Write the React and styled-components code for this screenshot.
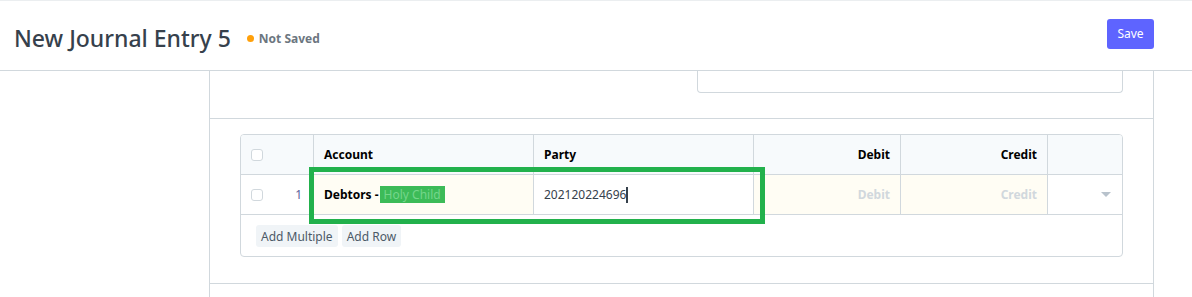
import React from "react";
import styled, { createGlobalStyle } from "styled-components";

const GlobalStyle = createGlobalStyle`
  html, body { margin: 0; padding: 0; background: #ffffff; }
  body { font-family: "Noto Sans", "Open Sans", sans-serif; color: #36414c; }
  * { box-sizing: border-box; }
`;

const Page = styled.div`
  position: relative;
  width: 1192px;
  height: 297px;
  overflow: hidden;
  border-top: 1px solid #ebeef0;
`;

const Header = styled.header`
  height: 70px;
  display: flex;
  align-items: center;
  justify-content: space-between;
  padding: 0 38px 0 14px;
  border-bottom: 1px solid #d1d8dd;
`;

const TitleGroup = styled.div`
  display: flex;
  align-items: center;
  gap: 16px;
  padding-top: 5px;
`;

const Title = styled.h1`
  margin: 0;
  font-size: 23px;
  font-weight: 500;
  color: #36414c;
`;

const Status = styled.span`
  display: flex;
  align-items: center;
  gap: 5px;
  font-size: 12px;
  font-weight: 700;
  color: #6c7680;
  &::before {
    content: "";
    width: 7px;
    height: 7px;
    border-radius: 50%;
    background: #ffa00a;
  }
`;

const PrimaryButton = styled.button`
  width: 47px;
  height: 30px;
  margin-top: -4px;
  border: none;
  border-radius: 3px;
  background: #5e64ff;
  color: #ffffff;
  font-family: inherit;
  font-size: 12px;
`;

const Body = styled.div`
  display: flex;
`;

const Sidebar = styled.aside`
  width: 209px;
  flex: none;
`;

const Main = styled.main`
  width: 945px;
  flex: none;
  border-left: 1px solid #d1d8dd;
  border-right: 1px solid #d1d8dd;
  min-height: 230px;
`;

const Section = styled.section`
  padding: ${(p) => p.$pad};
  border-bottom: 1px solid #d1d8dd;
  height: ${(p) => p.$height};
`;

const TwoCols = styled.div`
  display: grid;
  grid-template-columns: 1fr 1fr;
  gap: 30px;
`;

const FieldTail = styled.div`
  height: 22px;
  border: 1px solid #d1d8dd;
  border-top: none;
  border-radius: 0 0 4px 4px;
`;

const Grid = styled.div`
  border: 1px solid #d1d8dd;
  border-radius: 4px;
  overflow: hidden;
`;

const GridRow = styled.div`
  display: grid;
  grid-template-columns: 72px 220px 220px 147px 147px 75px;
  height: 40px;
  border-bottom: 1px solid #d1d8dd;
  background: ${(p) => (p.$head ? "#f7fafc" : "#ffffff")};
`;

const Cell = styled.div`
  display: flex;
  align-items: center;
  justify-content: ${(p) => p.$justify || "flex-start"};
  padding: 0 10px;
  border-left: ${(p) => (p.$first ? "none" : "1px solid #d1d8dd")};
  background: ${(p) => p.$bg || "transparent"};
  font-size: 12px;
  font-weight: ${(p) => (p.$bold ? 700 : 400)};
  color: ${(p) => p.$color || "#000000"};
  white-space: nowrap;
`;

const Checkbox = styled.span`
  width: 12px;
  height: 12px;
  border: 1px solid #d1d8dd;
  border-radius: 3px;
  background: #ffffff;
  flex: none;
`;

const RowNo = styled.span`
  margin-left: auto;
  margin-right: 1px;
  font-size: 12px;
  color: #5c5f99;
`;

const Redacted = styled.span`
  margin-left: 1px;
  padding: 0 4px;
  background: #3cbb58;
  color: #74d68b;
  font-weight: 400;
`;

const PartyInput = styled.div`
  display: flex;
  align-items: center;
  height: 100%;
  width: 100%;
  font-size: 12px;
  color: #36414c;
  &::after {
    content: "";
    width: 2px;
    height: 16px;
    background: #36414c;
  }
`;

const Placeholder = styled.span`
  color: #d1d8dd;
  font-weight: 700;
  font-size: 12px;
`;

const Caret = styled.span`
  margin: 0 1px 0 auto;
  width: 0;
  height: 0;
  border-left: 5px solid transparent;
  border-right: 5px solid transparent;
  border-top: 5px solid #b8c2cc;
`;

const Footer = styled.div`
  display: flex;
  gap: 4px;
  padding: 10px 15px;
  height: 41px;
`;

const SmallButton = styled.button`
  height: 22px;
  padding: 0 5px;
  border: none;
  border-radius: 3px;
  background: #f0f4f7;
  color: #4c5a67;
  font-family: inherit;
  font-size: 12px;
`;

const Highlight = styled.div`
  position: absolute;
  left: 309px;
  top: 166px;
  width: 456px;
  height: 57px;
  border: 5px solid #22b14c;
  pointer-events: none;
`;

export default function App() {
  return (
    <>
      <GlobalStyle />
      <Page>
        <Header>
          <TitleGroup>
            <Title>New Journal Entry 5</Title>
            <Status>Not Saved</Status>
          </TitleGroup>
          <PrimaryButton>Save</PrimaryButton>
        </Header>
        <Body>
          <Sidebar />
          <Main>
            <Section $pad="0 30px" $height="48px">
              <TwoCols>
                <div />
                <FieldTail />
              </TwoCols>
            </Section>
            <Section $pad="15px 30px 25px" $height="165px">
              <Grid>
                <GridRow $head>
                  <Cell $first>
                    <Checkbox />
                  </Cell>
                  <Cell $bold>Account</Cell>
                  <Cell $bold>Party</Cell>
                  <Cell $bold $justify="flex-end">Debit</Cell>
                  <Cell $bold $justify="flex-end">Credit</Cell>
                  <Cell />
                </GridRow>
                <GridRow>
                  <Cell $first>
                    <Checkbox />
                    <RowNo>1</RowNo>
                  </Cell>
                  <Cell $bold $bg="#fffdf4">
                    Debtors -<Redacted>Holy Child</Redacted>
                  </Cell>
                  <Cell>
                    <PartyInput>202120224696</PartyInput>
                  </Cell>
                  <Cell $bg="#fffdf4" $justify="flex-end">
                    <Placeholder>Debit</Placeholder>
                  </Cell>
                  <Cell $bg="#fffdf4" $justify="flex-end">
                    <Placeholder>Credit</Placeholder>
                  </Cell>
                  <Cell>
                    <Caret />
                  </Cell>
                </GridRow>
                <Footer>
                  <SmallButton>Add Multiple</SmallButton>
                  <SmallButton>Add Row</SmallButton>
                </Footer>
              </Grid>
            </Section>
          </Main>
        </Body>
        <Highlight />
      </Page>
    </>
  );
}
